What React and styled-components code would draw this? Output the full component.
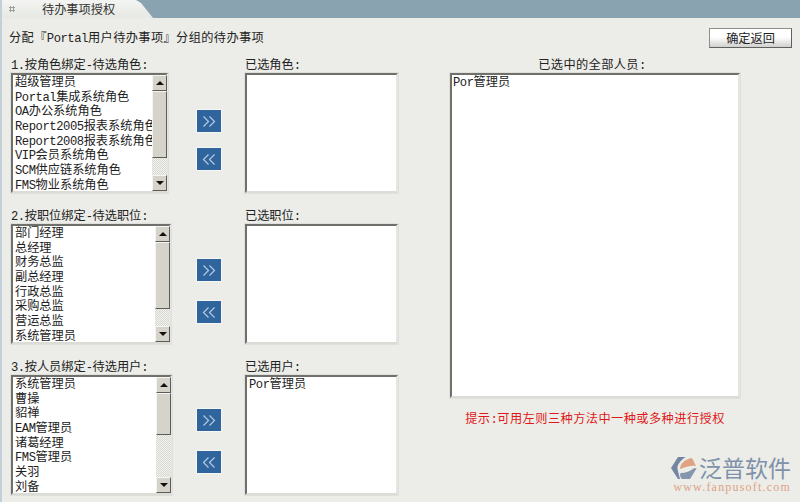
import React from 'react';
import styled, { createGlobalStyle } from 'styled-components';

const GlobalStyle = createGlobalStyle`
  html, body {
    margin: 0;
    padding: 0;
    background: #ecede8;
  }
  * {
    box-sizing: border-box;
  }
`;

const Page = styled.div`
  position: relative;
  width: 800px;
  height: 502px;
  overflow: hidden;
  background: #ecede8;
  border-left: 2px solid #c3d0d8;
  font-family: "Noto Sans CJK SC", "Liberation Mono", monospace;
  font-size: 12.2px;
  color: #222;
`;

const TopBar = styled.div`
  height: 18px;
  margin-left: -2px;
  background: #8aa3b1;
`;

const Tab = styled.div`
  display: flex;
  align-items: center;
  width: 153px;
  height: 18px;
  padding-left: 9px;
  background: linear-gradient(#f4f5f2, #e6e8e3);
  clip-path: polygon(0 0, 136px 0, 141px 3px, 153px 18px, 0 18px);
`;

const Grip = styled.span`
  width: 6px;
  height: 6px;
  margin-right: 27px;
  background: radial-gradient(circle, #9a9f9f 1px, transparent 1.2px) 0 0 / 3px 3px;
`;

const TabTitle = styled.span`
  line-height: 18px;
  color: #333;
`;

const Latin = styled.span`
  font-family: "Liberation Mono", monospace;
  letter-spacing: -0.45px;
`;

const HeadRow = styled.div`
  display: flex;
  justify-content: space-between;
  height: 39px;
  padding: 10px 8px 0 7px;
`;

const Heading = styled.div`
  line-height: 18px;
  letter-spacing: 0.4px;
  white-space: nowrap;
`;

const ConfirmButton = styled.button`
  width: 83px;
  height: 20px;
  padding: 0;
  border: 1px solid #8d8f8b;
  border-right-color: #5f615e;
  border-bottom-color: #5f615e;
  background: linear-gradient(#ffffff 0, #ffffff 45%, #d0d1ce 100%);
  font: inherit;
  color: #222;
`;

const Main = styled.div`
  display: flex;
`;

const LeftArea = styled.div`
  display: flex;
  flex-direction: column;
  gap: 15px;
  width: 448px;
  padding-left: 9px;
`;

const Group = styled.div`
  display: grid;
  grid-template-columns: 186px 48px 1fr;
`;

const Field = styled.div`
  display: flex;
  flex-direction: column;
  align-items: flex-start;
`;

const FieldLabel = styled.div`
  height: 14px;
  margin-bottom: 2px;
  line-height: 14px;
  white-space: nowrap;
`;

const ListFrame = styled.div`
  display: flex;
  width: ${(p) => p.$width}px;
  height: 120px;
  border: 2px solid;
  border-color: #6f706c #e6e6e1 #dcdcd7 #6f706c;
  outline: 1px solid #dfe0db;
  background: #fff;
`;

const ListBody = styled.div`
  flex: 1;
  min-width: 0;
  overflow: hidden;
  padding-left: 2px;
`;

const ListInner = styled.div`
  margin-top: -1px;
`;

const ListRow = styled.div`
  height: 14.7px;
  line-height: 14.7px;
  white-space: nowrap;
`;

const ScrollBar = styled.div`
  display: flex;
  flex-direction: column;
  flex: none;
  width: 15px;
  margin-right: -1px;
  background: repeating-conic-gradient(#d8d8d3 0 25%, #f2f2ee 0 50%) 0 0 / 2px 2px;
`;

const ScrollArrow = styled.div`
  display: flex;
  align-items: center;
  justify-content: center;
  flex: none;
  height: 16px;
  background: #d6d3cb;
  border: 1px solid;
  border-color: #f5f5f1 #5c5c58 #5c5c58 #f5f5f1;
  margin-top: ${(p) => (p.$down ? 'auto' : '0')};

  &::after {
    content: '';
    border-left: 4px solid transparent;
    border-right: 4px solid transparent;
    ${(p) => (p.$down ? 'border-top: 4px solid #111;' : 'border-bottom: 4px solid #111;')}
  }
`;

const ScrollThumb = styled.div`
  flex: none;
  height: ${(p) => p.$height}px;
  background: #d6d3cb;
  border: 1px solid;
  border-color: #f5f5f1 #5c5c58 #5c5c58 #f5f5f1;
`;

const MoveColumn = styled.div`
  display: flex;
  flex-direction: column;
  gap: ${(p) => p.$gap}px;
  padding-top: ${(p) => p.$top}px;
`;

const MoveButton = styled.button`
  display: flex;
  align-items: center;
  justify-content: center;
  width: 24px;
  height: 22px;
  padding: 0;
  border: 0;
  background: #2f659c;
  outline: 1px solid #f6f7f4;
`;

const PickedFrame = styled.div`
  width: ${(p) => p.$width}px;
  height: ${(p) => p.$height}px;
  padding-left: ${(p) => p.$inset}px;
  border: 2px solid;
  border-color: #6f706c #e6e6e1 #dcdcd7 #6f706c;
  outline: 1px solid #dfe0db;
  background: #fff;
  line-height: 13px;
`;

const RightArea = styled.div`
  display: flex;
  flex-direction: column;
`;

const RightTitle = styled.div`
  height: 14px;
  margin-bottom: 2px;
  padding-right: 6px;
  line-height: 14px;
  letter-spacing: 0.4px;
  text-align: center;
`;

const Hint = styled.div`
  margin-top: 12px;
  line-height: 16px;
  letter-spacing: 0.45px;
  text-align: center;
  color: #e01818;
`;

const Watermark = styled.div`
  position: absolute;
  right: 9px;
  bottom: 9px;
  display: flex;
  flex-direction: column;
  align-items: flex-end;
`;

const BrandLine = styled.div`
  display: flex;
  align-items: center;
  gap: 2px;
  height: 25px;
`;

const BrandName = styled.span`
  font-size: 23px;
  line-height: 25px;
  color: #7f92aa;
`;

const BrandUrl = styled.div`
  margin-top: 1px;
  font-family: "Liberation Serif", serif;
  font-size: 12px;
  line-height: 12px;
  letter-spacing: 1.2px;
  color: #dea284;
`;

const mix = (text) =>
  text.split(/([A-Za-z0-9.:-]+)/).map((part, i) => (i % 2 ? <Latin key={i}>{part}</Latin> : part));

const Arrows = ({ back }) => (
  <svg width="14" height="11" viewBox="0 0 14 11" fill="none" stroke="#b3cbe2" strokeWidth="1.2">
    {back ? <path d="M6.5 .5 1.5 5.5l5 5M12.5 .5 7.5 5.5l5 5" /> : <path d="M1.5 .5l5 5-5 5M7.5 .5l5 5-5 5" />}
  </svg>
);

const Logo = () => (
  <svg width="26" height="24" viewBox="0 0 26 24">
    <path d="M7 1h7.5C9 5 6 9 6.5 13L9 23H7L0 12z" fill="#7486a0" />
    <path d="M9 13c0-5 5-10 12-11l4 8c-5-1-10 1-16 3z" fill="#e0a283" />
    <path d="M10 22c-1-2-1-3-.5-5 5 0 10-2 14-5l2 .5L19 23H11z" fill="#8496ad" />
  </svg>
);

const groups = [
  {
    label: '1.按角色绑定-待选角色:',
    pickedLabel: '已选角色:',
    width: 157,
    thumb: 67,
    moveTop: 53,
    moveGap: 16,
    picked: '',
    rows: [
      '超级管理员',
      'Portal集成系统角色',
      'OA办公系统角色',
      'Report2005报表系统角色',
      'Report2008报表系统角色',
      'VIP会员系统角色',
      'SCM供应链系统角色',
      'FMS物业系统角色',
    ],
  },
  {
    label: '2.按职位绑定-待选职位:',
    pickedLabel: '已选职位:',
    width: 160,
    thumb: 67,
    moveTop: 51,
    moveGap: 20,
    picked: '',
    rows: ['部门经理', '总经理', '财务总监', '副总经理', '行政总监', '采购总监', '营运总监', '系统管理员'],
  },
  {
    label: '3.按人员绑定-待选用户:',
    pickedLabel: '已选用户:',
    width: 161,
    thumb: 42,
    moveTop: 50,
    moveGap: 20,
    picked: 'Por管理员',
    rows: ['系统管理员', '曹操', '貂禅', 'EAM管理员', '诸葛经理', 'FMS管理员', '关羽', '刘备'],
  },
];

const App = () => (
  <>
    <GlobalStyle />
    <Page>
      <TopBar>
        <Tab>
          <Grip />
          <TabTitle>待办事项授权</TabTitle>
        </Tab>
      </TopBar>
      <HeadRow>
        <Heading>{mix('分配『Portal用户待办事项』分组的待办事项')}</Heading>
        <ConfirmButton>确定返回</ConfirmButton>
      </HeadRow>
      <Main>
        <LeftArea>
          {groups.map((g) => (
            <Group key={g.label}>
              <Field>
                <FieldLabel>{mix(g.label)}</FieldLabel>
                <ListFrame $width={g.width}>
                  <ListBody>
                    <ListInner>
                      {g.rows.map((row) => (
                        <ListRow key={row}>{mix(row)}</ListRow>
                      ))}
                    </ListInner>
                  </ListBody>
                  <ScrollBar>
                    <ScrollArrow />
                    <ScrollThumb $height={g.thumb} />
                    <ScrollArrow $down />
                  </ScrollBar>
                </ListFrame>
              </Field>
              <MoveColumn $top={g.moveTop} $gap={g.moveGap}>
                <MoveButton>
                  <Arrows />
                </MoveButton>
                <MoveButton>
                  <Arrows back />
                </MoveButton>
              </MoveColumn>
              <Field>
                <FieldLabel>{mix(g.pickedLabel)}</FieldLabel>
                <PickedFrame $width={153} $height={120} $inset={2}>
                  {mix(g.picked)}
                </PickedFrame>
              </Field>
            </Group>
          ))}
        </LeftArea>
        <RightArea>
          <RightTitle>{mix('已选中的全部人员:')}</RightTitle>
          <PickedFrame $width={290} $height={325} $inset={1}>
            {mix('Por管理员')}
          </PickedFrame>
          <Hint>{mix('提示:可用左则三种方法中一种或多种进行授权')}</Hint>
        </RightArea>
      </Main>
      <Watermark>
        <BrandLine>
          <Logo />
          <BrandName>泛普软件</BrandName>
        </BrandLine>
        <BrandUrl>www.fanpusoft.com</BrandUrl>
      </Watermark>
    </Page>
  </>
);

export default App;
